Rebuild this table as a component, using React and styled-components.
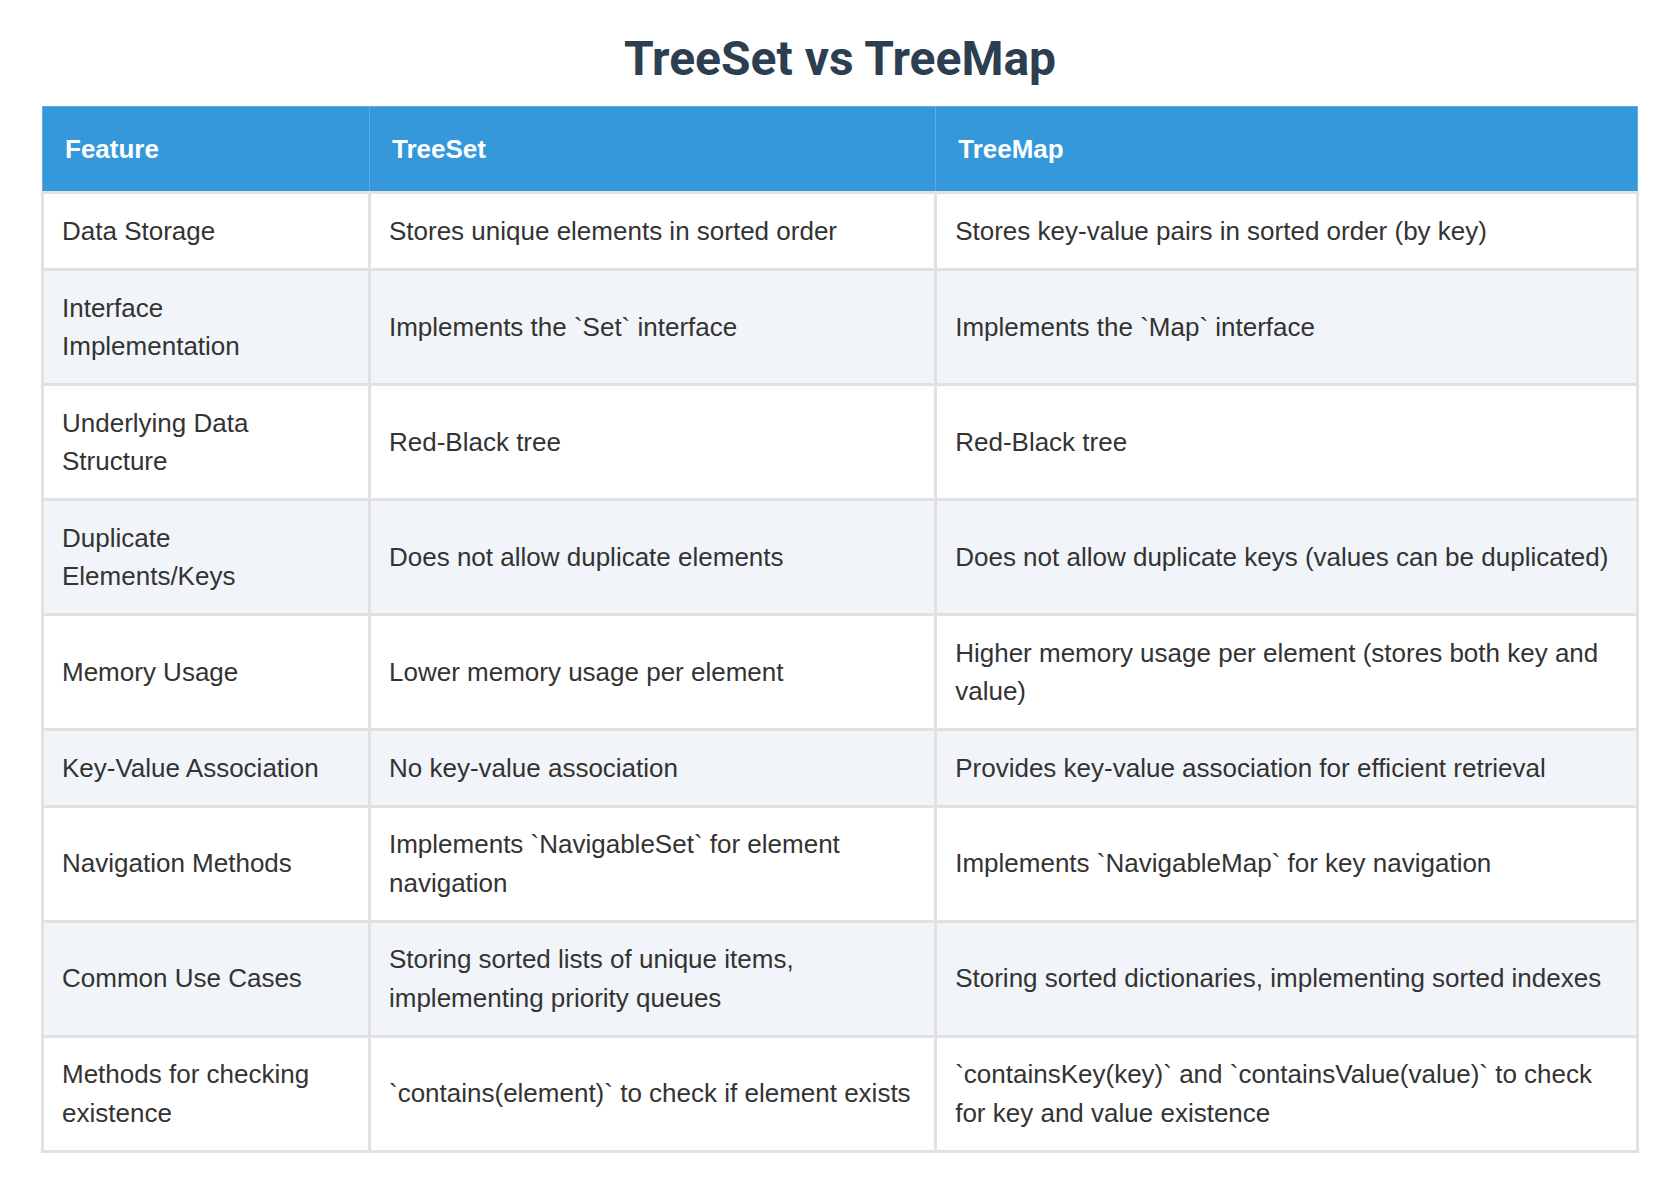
import React from 'react';
import styled, { createGlobalStyle } from 'styled-components';

const GlobalStyle = createGlobalStyle`
  html, body {
    margin: 0;
    padding: 0;
    background: #ffffff;
  }
  body {
    font-family: 'Liberation Sans', Arial, sans-serif;
    color: #333333;
  }
`;

const Page = styled.div`
  padding: 31px 41px 40px;
`;

const Title = styled.h1`
  margin: 0 0 19px;
  text-align: center;
  font-family: 'Roboto', 'Liberation Sans', Arial, sans-serif;
  font-size: 48px;
  line-height: 56px;
  font-weight: 700;
  color: #2c3e50;
`;

const Table = styled.table`
  width: 100%;
  border-collapse: collapse;
  font-size: 26px;
  line-height: 38.4px;
`;

const HeadCell = styled.th`
  background: #3498db;
  color: #ffffff;
  font-weight: 700;
  text-align: left;
  padding: 23px 22px;
  border-top: 1px solid #5dade2;
  border-left: 1px solid #5dade2;
  border-right: 1px solid #5dade2;
  border-bottom: 1px solid #3498db;
`;

const Row = styled.tr`
  background: ${(p) => (p.$striped ? '#f1f5f9' : '#ffffff')};
`;

const Cell = styled.td`
  padding: 17.6px ${(p) => (p.$first ? '40px' : '18px')} 17.6px 18px;
  border: 3px solid #e1e1e1;
  vertical-align: middle;
  color: #333333;
`;

const rows = [
  ['Data Storage', 'Stores unique elements in sorted order', 'Stores key-value pairs in sorted order (by key)'],
  ['Interface Implementation', 'Implements the `Set` interface', 'Implements the `Map` interface'],
  ['Underlying Data Structure', 'Red-Black tree', 'Red-Black tree'],
  ['Duplicate Elements/Keys', 'Does not allow duplicate elements', 'Does not allow duplicate keys (values can be duplicated)'],
  ['Memory Usage', 'Lower memory usage per element', 'Higher memory usage per element (stores both key and value)'],
  ['Key-Value Association', 'No key-value association', 'Provides key-value association for efficient retrieval'],
  ['Navigation Methods', 'Implements `NavigableSet` for element navigation', 'Implements `NavigableMap` for key navigation'],
  ['Common Use Cases', 'Storing sorted lists of unique items, implementing priority queues', 'Storing sorted dictionaries, implementing sorted indexes'],
  ['Methods for checking existence', '`contains(element)` to check if element exists', '`containsKey(key)` and `containsValue(value)` to check for key and value existence'],
];

const App = () => {
  return (
    <Page>
      <GlobalStyle />
      <Title>TreeSet vs TreeMap</Title>
      <Table>
        <colgroup>
          <col style={{ width: '20.5%' }} />
          <col style={{ width: '35.5%' }} />
          <col style={{ width: '44%' }} />
        </colgroup>
        <thead>
          <tr>
            <HeadCell>Feature</HeadCell>
            <HeadCell>TreeSet</HeadCell>
            <HeadCell>TreeMap</HeadCell>
          </tr>
        </thead>
        <tbody>
          {rows.map((r, i) => (
            <Row key={r[0]} $striped={i % 2 === 1}>
              {r.map((c, j) => (
                <Cell key={j} $first={j === 0}>{c}</Cell>
              ))}
            </Row>
          ))}
        </tbody>
      </Table>
    </Page>
  );
};

export default App;
